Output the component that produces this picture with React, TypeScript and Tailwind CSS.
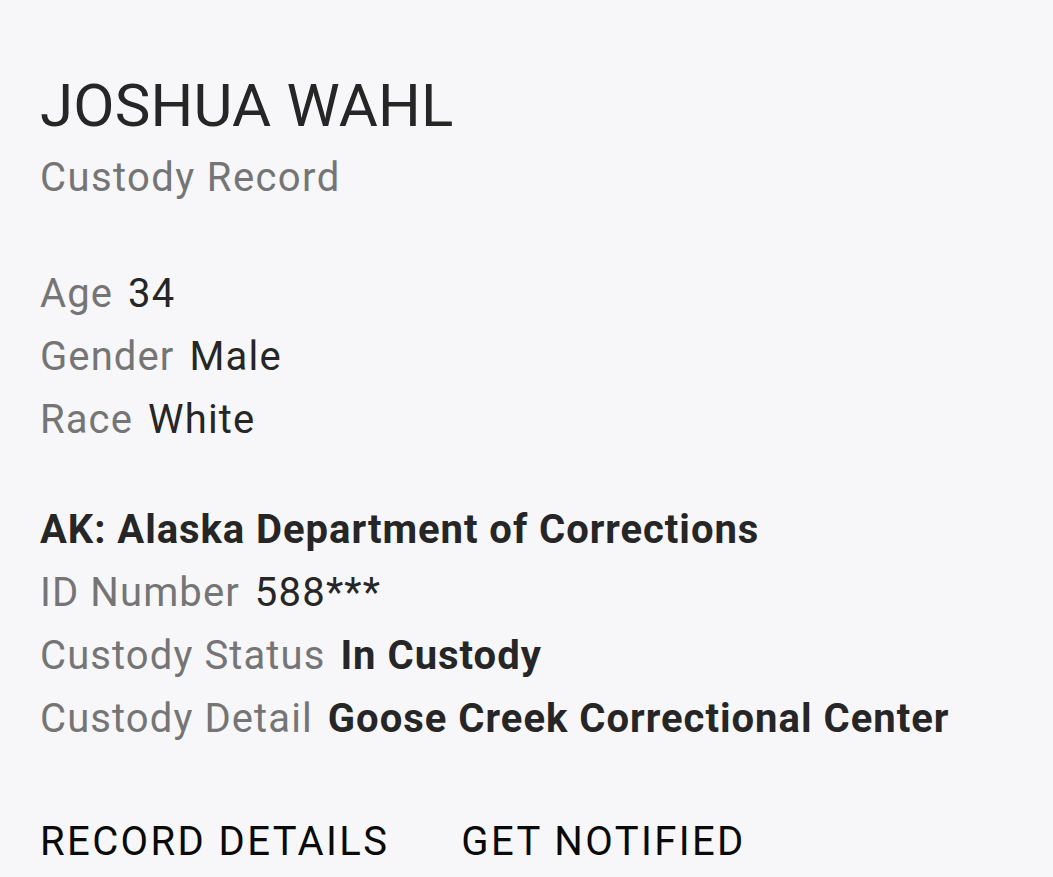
import React from 'react';

const Row = ({ label, value, bold }: { label: string; value: string; bold?: boolean }) => (
  <div className="flex items-baseline text-[40px] leading-[63px]">
    <span className="tracking-[1.1px] text-[#757575]">{label}</span>
    <span className={`ml-[15px] text-[#262626] ${bold ? 'font-bold tracking-[1px]' : 'tracking-[1.2px]'}`}>{value}</span>
  </div>
);

const App = () => {
  return (
    <div className="min-h-screen bg-[#f7f7f9] px-10 pt-[70px] font-['Roboto',sans-serif]">
      <h1 className="text-[60px] leading-[72px] tracking-[0.2px] text-[#262626]">JOSHUA WAHL</h1>
      <div className="mt-[12px] text-[40px] leading-[48px] tracking-[1.4px] text-[#757575]">Custody Record</div>

      <div className="mt-[60px]">
        <Row label="Age" value="34" />
        <Row label="Gender" value="Male" />
        <Row label="Race" value="White" />
      </div>

      <div className="mt-[47px]">
        <div className="text-[40px] font-bold leading-[63px] tracking-[0.95px] text-[#262626]">AK: Alaska Department of Corrections</div>
        <Row label="ID Number" value="588***" />
        <Row label="Custody Status" value="In Custody" bold />
        <Row label="Custody Detail" value="Goose Creek Correctional Center" bold />
      </div>

      <div className="mt-[60px] flex gap-[72px] text-[40px] leading-[63px] tracking-[2.4px] text-[#0a0a0a]">
        <button className="uppercase">Record Details</button>
        <button className="uppercase">Get Notified</button>
      </div>
    </div>
  );
};

export default App;
